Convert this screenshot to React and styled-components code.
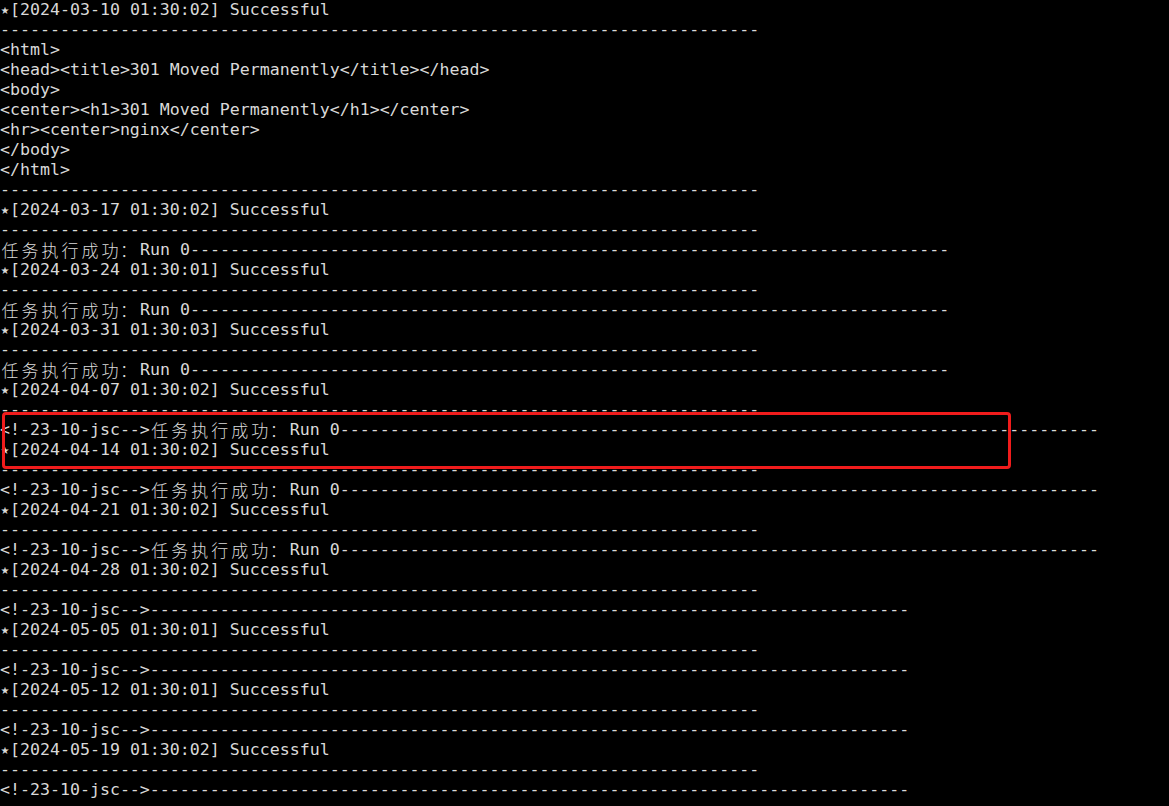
import React from "react";
import styled, { createGlobalStyle } from "styled-components";

const GlobalStyle = createGlobalStyle`
  html, body {
    margin: 0;
    padding: 0;
    background: #000;
  }
  #root {
    background: #000;
  }
`;

const Terminal = styled.div`
  position: relative;
  width: 1169px;
  height: 806px;
  overflow: hidden;
  background: #000;
  color: #d9d9d9;
  font-family: "DejaVu Sans Mono", "Liberation Mono", monospace;
  font-size: 16.6px;
  line-height: 20px;
  display: flex;
  flex-direction: column;
`;

const Line = styled.div`
  height: 20px;
  white-space: pre;
`;

const Star = styled.span`
  display: inline-block;
  width: 10px;
  font-family: "DejaVu Sans", sans-serif;
  font-size: 10px;
  vertical-align: top;
  line-height: 21px;
  text-align: left;
  text-indent: 0.5px;
`;

const Wide = styled.span`
  display: inline-block;
  width: 20px;
  text-align: center;
  font-family: "Noto Sans CJK SC", "DejaVu Sans Mono", sans-serif;
  font-size: 17px;
  font-weight: 300;
  vertical-align: top;
  line-height: 20px;
`;

const WideColon = styled(Wide)`
  text-align: left;
`;

const Highlight = styled.div`
  position: absolute;
  left: 2px;
  top: 412px;
  width: 1003px;
  height: 51px;
  border: 3px solid #f01c1c;
  border-radius: 4px;
  pointer-events: none;
`;

const DASH = "-".repeat(76);
const TASK = "任务执行成功：Run 0" + DASH;
const MARK = "<!-23-10-jsc-->";

const lines = [
  "★[2024-03-10 01:30:02] Successful",
  DASH,
  "<html>",
  "<head><title>301 Moved Permanently</title></head>",
  "<body>",
  "<center><h1>301 Moved Permanently</h1></center>",
  "<hr><center>nginx</center>",
  "</body>",
  "</html>",
  DASH,
  "★[2024-03-17 01:30:02] Successful",
  DASH,
  TASK,
  "★[2024-03-24 01:30:01] Successful",
  DASH,
  TASK,
  "★[2024-03-31 01:30:03] Successful",
  DASH,
  TASK,
  "★[2024-04-07 01:30:02] Successful",
  DASH,
  MARK + TASK,
  "★[2024-04-14 01:30:02] Successful",
  DASH,
  MARK + TASK,
  "★[2024-04-21 01:30:02] Successful",
  DASH,
  MARK + TASK,
  "★[2024-04-28 01:30:02] Successful",
  DASH,
  MARK + DASH,
  "★[2024-05-05 01:30:01] Successful",
  DASH,
  MARK + DASH,
  "★[2024-05-12 01:30:01] Successful",
  DASH,
  MARK + DASH,
  "★[2024-05-19 01:30:02] Successful",
  DASH,
  MARK + DASH,
];

function renderText(text) {
  const out = [];
  let buf = "";
  const flush = (k) => {
    if (buf) {
      out.push(<React.Fragment key={"t" + k}>{buf}</React.Fragment>);
      buf = "";
    }
  };
  Array.from(text).forEach((ch, i) => {
    if (ch === "★") {
      flush(i);
      out.push(<Star key={i}>★</Star>);
    } else if (ch === "：") {
      flush(i);
      out.push(<WideColon key={i}>{ch}</WideColon>);
    } else if (/[\u3000-\u9fff\uff00-\uffef]/.test(ch)) {
      flush(i);
      out.push(<Wide key={i}>{ch}</Wide>);
    } else {
      buf += ch;
    }
  });
  flush("end");
  return out;
}

export default function App() {
  return (
    <>
      <GlobalStyle />
      <Terminal>
        {lines.map((l, i) => (
          <Line key={i}>{renderText(l)}</Line>
        ))}
        <Highlight />
      </Terminal>
    </>
  );
}
